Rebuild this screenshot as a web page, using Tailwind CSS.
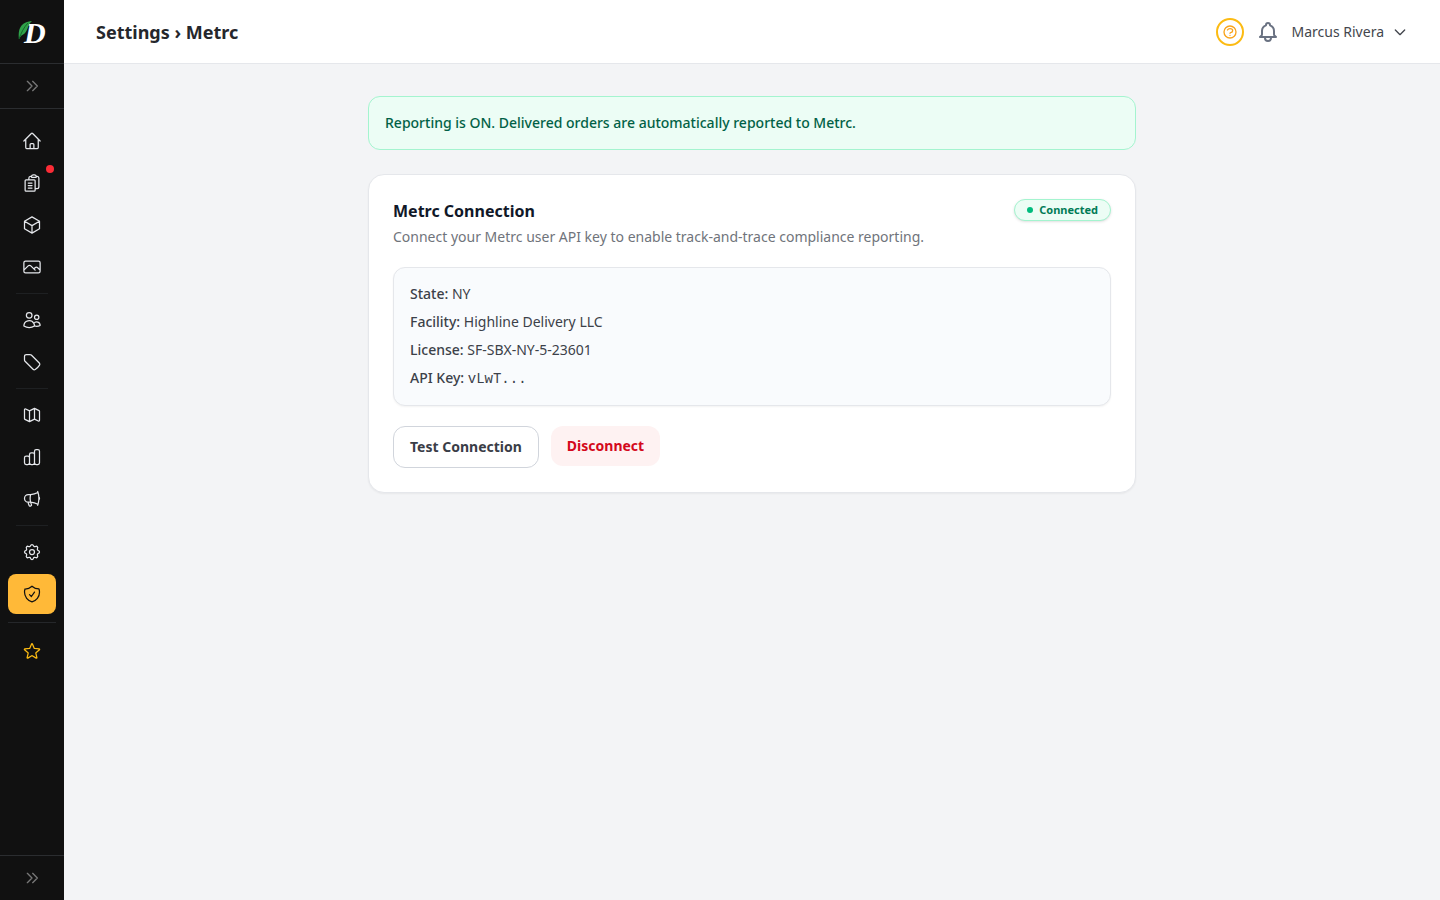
<!DOCTYPE html>
<html lang="en">
<head>
    <meta charset="UTF-8">
    <meta name="viewport" content="width=device-width, initial-scale=1">
    <title>Settings › Metrc</title>
    <script src="https://cdn.jsdelivr.net/npm/@tailwindcss/browser@4"></script>
</head>
<body class="flex min-h-screen bg-gray-100 font-['Noto_Sans',sans-serif] text-sm text-gray-700">

    <!-- Sidebar -->
    <aside class="flex min-h-screen w-16 shrink-0 flex-col bg-[#111111] text-gray-200">
        <a href="#" aria-label="Home page" class="flex h-16 items-center justify-center border-b border-[#2b2d30]">
            <svg class="size-12 overflow-visible" viewBox="0 0 48 48" aria-hidden="true">
                <text x="16" y="35" font-family="Liberation Sans Narrow, Liberation Serif, serif" font-size="30" font-weight="700" font-style="italic" fill="#ffffff">D</text>
                <path d="M11 31C10 22 12 14 24 13C20 16 20 22 17 25C15 27 13 27 11 31Z" fill="#2fa24a"/>
                <path d="M11 31C13 25 16 19 20 15" fill="none" stroke="#14662a" stroke-width="1"/>
            </svg>
        </a>
        <button type="button" aria-label="Expand sidebar" class="flex h-[45px] items-center justify-center border-b border-[#2b2d30] text-[#777777]">
            <svg class="size-4" fill="none" viewBox="0 0 24 24" stroke="currentColor" stroke-width="2" stroke-linecap="round" stroke-linejoin="round"><path d="M13 5l7 7-7 7M5 5l7 7-7 7"/></svg>
        </button>

        <nav class="flex flex-1 flex-col px-2 py-3">
            <div class="flex flex-col gap-0.5">
                <a href="#" aria-label="Home" class="flex h-10 items-center justify-center rounded-lg">
                    <svg class="size-5" fill="none" viewBox="0 0 24 24" stroke="currentColor" stroke-width="1.5" stroke-linecap="round" stroke-linejoin="round"><path d="m2.25 12 8.954-8.955c.44-.439 1.152-.439 1.591 0L21.75 12M4.5 9.75v10.125c0 .621.504 1.125 1.125 1.125H9.75v-4.875c0-.621.504-1.125 1.125-1.125h2.25c.621 0 1.125.504 1.125 1.125V21h4.125c.621 0 1.125-.504 1.125-1.125V9.75M8.25 21h8.25"/></svg>
                </a>
                <a href="#" aria-label="Orders" class="relative flex h-10 items-center justify-center rounded-lg">
                    <svg class="size-5" fill="none" viewBox="0 0 24 24" stroke="currentColor" stroke-width="1.5" stroke-linecap="round" stroke-linejoin="round"><path d="M7.5 12h4.5M7.5 15h4.5M7.5 18h4.5m3.75 .75H18a2.25 2.25 0 0 0 2.25-2.25V6.108c0-1.135-.845-2.098-1.976-2.192a48.424 48.424 0 0 0-1.123-.08m-5.801 0c-.065.21-.1.433-.1.664 0 .414.336.75.75.75h4.5a.75.75 0 0 0 .75-.75 2.25 2.25 0 0 0-.1-.664m-5.8 0A2.251 2.251 0 0 1 13.5 2.25H15c1.012 0 1.867.668 2.15 1.586m-5.8 0c-.376.023-.75.05-1.124.08C9.095 4.01 8.25 4.973 8.25 6.108V8.25m0 0H4.875c-.621 0-1.125.504-1.125 1.125v11.25c0 .621.504 1.125 1.125 1.125h9.75c.621 0 1.125-.504 1.125-1.125V9.375c0-.621-.504-1.125-1.125-1.125H8.25Z"/></svg>
                    <span class="absolute top-0.5 right-0.5 size-2 rounded-full bg-[#fb2c36]"></span>
                </a>
                <a href="#" aria-label="Products" class="flex h-10 items-center justify-center rounded-lg">
                    <svg class="size-5" fill="none" viewBox="0 0 24 24" stroke="currentColor" stroke-width="1.5" stroke-linecap="round" stroke-linejoin="round"><path d="m21 7.5-9-5.25L3 7.5m18 0-9 5.25m9-5.25v9l-9 5.25M3 7.5l9 5.25M3 7.5v9l9 5.25m0-9v9"/></svg>
                </a>
                <a href="#" aria-label="Media" class="flex h-10 items-center justify-center rounded-lg">
                    <svg class="size-5" fill="none" viewBox="0 0 24 24" stroke="currentColor" stroke-width="1.5" stroke-linecap="round" stroke-linejoin="round"><path d="m2.25 15.75 5.159-5.159a2.25 2.25 0 0 1 3.182 0l5.159 5.159m-1.5-1.5 1.409-1.409a2.25 2.25 0 0 1 3.182 0l2.909 2.909M4.25 19h15.5a2 2 0 0 0 2-2V7a2 2 0 0 0-2-2H4.25a2 2 0 0 0-2 2v10a2 2 0 0 0 2 2Z"/></svg>
                </a>
            </div>

            <div class="mx-2 my-1.5 border-t border-[#1e2022]"></div>

            <div class="flex flex-col gap-0.5">
                <a href="#" aria-label="Customers" class="flex h-10 items-center justify-center rounded-lg">
                    <svg class="size-5" fill="none" viewBox="0 0 24 24" stroke="currentColor" stroke-width="1.5" stroke-linecap="round" stroke-linejoin="round"><path d="M15 19.128a9.38 9.38 0 0 0 2.625.372 9.337 9.337 0 0 0 4.121-.952 4.125 4.125 0 0 0-7.533-2.493M15 19.128v-.003c0-1.113-.285-2.16-.786-3.07M15 19.128v.106A12.318 12.318 0 0 1 8.624 21c-2.331 0-4.512-.645-6.374-1.766l-.001-.109a6.375 6.375 0 0 1 11.964-3.07M12 6.375a3.375 3.375 0 1 1-6.75 0 3.375 3.375 0 0 1 6.75 0Zm8.25 2.25a2.625 2.625 0 1 1-5.25 0 2.625 2.625 0 0 1 5.25 0Z"/></svg>
                </a>
                <a href="#" aria-label="Promotions" class="flex h-10 items-center justify-center rounded-lg">
                    <svg class="size-5" fill="none" viewBox="0 0 24 24" stroke="currentColor" stroke-width="1.5" stroke-linecap="round" stroke-linejoin="round"><path d="M9.568 3H5.25A2.25 2.25 0 0 0 3 5.25v4.318c0 .597.237 1.17.659 1.591l9.581 9.581c.699.699 1.78.872 2.607.33a18.095 18.095 0 0 0 5.223-5.223c.542-.827.369-1.908-.33-2.607L11.16 3.66A2.25 2.25 0 0 0 9.568 3Z"/></svg>
                </a>
            </div>

            <div class="mx-2 my-1.5 border-t border-[#1e2022]"></div>

            <div class="flex flex-col gap-0.5">
                <a href="#" aria-label="Map" class="flex h-10 items-center justify-center rounded-lg">
                    <svg class="size-5" fill="none" viewBox="0 0 24 24" stroke="currentColor" stroke-width="1.5" stroke-linecap="round" stroke-linejoin="round"><path d="M9 20l-5.447-2.724A1 1 0 013 16.382V5.618a1 1 0 011.447-.894L9 7m0 13l6-3m-6 3V7m6 10l4.553 2.276A1 1 0 0021 18.382V7.618a1 1 0 00-.553-.894L15 4m0 13V4m0 0L9 7"/></svg>
                </a>
                <a href="#" aria-label="Reports" class="flex h-10 items-center justify-center rounded-lg">
                    <svg class="size-5" fill="none" viewBox="0 0 24 24" stroke="currentColor" stroke-width="1.5" stroke-linecap="round" stroke-linejoin="round"><path d="M9 19v-6a2 2 0 00-2-2H5a2 2 0 00-2 2v6a2 2 0 002 2h2a2 2 0 002-2zm0 0V9a2 2 0 012-2h2a2 2 0 012 2v10m-6 0a2 2 0 002 2h2a2 2 0 002-2m0 0V5a2 2 0 012-2h2a2 2 0 012 2v14a2 2 0 01-2 2h-2a2 2 0 01-2-2z"/></svg>
                </a>
                <a href="#" aria-label="Marketing" class="flex h-10 items-center justify-center rounded-lg">
                    <svg class="size-5" fill="none" viewBox="0 0 24 24" stroke="currentColor" stroke-width="1.5" stroke-linecap="round" stroke-linejoin="round"><path d="M10.34 15.84c-.688-.06-1.386-.09-2.09-.09H7.5a4.5 4.5 0 1 1 0-9h.75c.704 0 1.402-.03 2.09-.09m0 9.18c.253.962.584 1.892.985 2.783.247.55.06 1.21-.463 1.511l-.657.38c-.551.318-1.26.117-1.527-.461a20.845 20.845 0 0 1-1.44-4.282m3.102.069a18.03 18.03 0 0 1-.59-4.59c0-1.586.205-3.124.59-4.59m0 9.18a23.848 23.848 0 0 1 8.835 2.535M10.34 6.66a23.847 23.847 0 0 0 8.835-2.535m0 0A23.74 23.74 0 0 0 18.795 3m.38 1.125a23.91 23.91 0 0 1 1.014 5.395m-1.014 8.855c-.118.38-.245.754-.38 1.125m.38-1.125a23.91 23.91 0 0 0 1.014-5.395m0-3.46c.495.413.811 1.035.811 1.73 0 .695-.316 1.317-.811 1.73m0-3.46a24.347 24.347 0 0 1 0 3.46"/></svg>
                </a>
            </div>

            <div class="mx-2 my-1.5 border-t border-[#1e2022]"></div>

            <div class="flex flex-col gap-0.5">
                <a href="#" aria-label="Settings" class="flex h-10 items-center justify-center rounded-lg">
                    <svg class="size-5" fill="none" viewBox="0 0 24 24" stroke="currentColor" stroke-width="1.5" stroke-linecap="round" stroke-linejoin="round"><path d="M10.325 4.317c.426-1.756 2.924-1.756 3.35 0a1.724 1.724 0 002.573 1.066c1.543-.94 3.31.826 2.37 2.37a1.724 1.724 0 001.065 2.572c1.756.426 1.756 2.924 0 3.35a1.724 1.724 0 00-1.066 2.573c.94 1.543-.826 3.31-2.37 2.37a1.724 1.724 0 00-2.572 1.065c-.426 1.756-2.924 1.756-3.35 0a1.724 1.724 0 00-2.573-1.066c-1.543.94-3.31-.826-2.37-2.37a1.724 1.724 0 00-1.065-2.572c-1.756-.426-1.756-2.924 0-3.35a1.724 1.724 0 001.066-2.573c-.94-1.543.826-3.31 2.37-2.37.996.608 2.296.07 2.572-1.065z"/><path d="M15 12a3 3 0 11-6 0 3 3 0 016 0z"/></svg>
                </a>
                <a href="#" aria-label="Compliance" aria-current="page" class="flex h-10 items-center justify-center rounded-lg bg-[#ffb938] text-[#111111]">
                    <svg class="size-5" fill="none" viewBox="0 0 24 24" stroke="currentColor" stroke-width="1.5" stroke-linecap="round" stroke-linejoin="round"><path d="M9 12.75 11.25 15 15 9.75m-3-7.036A11.959 11.959 0 0 1 3.598 6 11.99 11.99 0 0 0 3 9.749c0 5.592 3.824 10.29 9 11.623 5.176-1.332 9-6.03 9-11.622 0-1.31-.21-2.571-.598-3.751h-.152c-3.196 0-6.1-1.248-8.25-3.285Z"/></svg>
                </a>
            </div>

            <div class="my-2 border-t border-[#25272a]"></div>

            <a href="#" aria-label="Upgrade" class="flex h-10 items-center justify-center rounded-lg text-[#fcbb12]">
                <svg class="size-5" fill="none" viewBox="0 0 24 24" stroke="currentColor" stroke-width="1.5" stroke-linecap="round" stroke-linejoin="round"><path d="M11.48 3.499a.562.562 0 0 1 1.04 0l2.125 5.111a.563.563 0 0 0 .475.345l5.518.442c.499.04.701.663.321.988l-4.204 3.602a.563.563 0 0 0-.182.557l1.285 5.385a.562.562 0 0 1-.84.61l-4.725-2.885a.562.562 0 0 0-.586 0L6.982 20.54a.562.562 0 0 1-.84-.61l1.285-5.386a.562.562 0 0 0-.182-.557l-4.204-3.602a.562.562 0 0 1 .321-.988l5.518-.442a.563.563 0 0 0 .475-.345L11.48 3.5Z"/></svg>
            </a>
        </nav>

        <button type="button" aria-label="Expand sidebar" class="flex h-[45px] items-center justify-center border-t border-[#2b2d30] text-[#777777]">
            <svg class="size-4" fill="none" viewBox="0 0 24 24" stroke="currentColor" stroke-width="2" stroke-linecap="round" stroke-linejoin="round"><path d="M13 5l7 7-7 7M5 5l7 7-7 7"/></svg>
        </button>
    </aside>

    <div class="flex min-w-0 flex-1 flex-col">
        <!-- Top bar -->
        <header class="flex h-16 items-center justify-between border-b border-gray-200 bg-white px-8">
            <h1 class="text-lg font-bold text-[#25272c]">Settings › Metrc</h1>
            <div class="flex items-center gap-3">
                <button type="button" aria-label="Help" class="flex size-7 items-center justify-center rounded-full border-2 border-[#fcbb12] text-[#f9a31a]">
                    <svg class="size-4" fill="none" viewBox="0 0 24 24" stroke="currentColor" stroke-width="2" stroke-linecap="round" stroke-linejoin="round"><path d="M8.228 9c.549-1.165 2.03-2 3.772-2 2.21 0 4 1.343 4 3 0 1.4-1.278 2.575-3.006 2.907-.542.104-.994.54-.994 1.093m0 3h.01M21 12a9 9 0 11-18 0 9 9 0 0118 0z"/></svg>
                </button>
                <button type="button" aria-label="Notifications" class="text-gray-500">
                    <svg class="size-6" fill="none" viewBox="0 0 24 24" stroke="currentColor" stroke-width="2" stroke-linecap="round" stroke-linejoin="round"><path d="M15 17h5l-1.405-1.405A2.032 2.032 0 0118 14.158V11a6.002 6.002 0 00-4-5.659V5a2 2 0 10-4 0v.341C7.67 6.165 6 8.388 6 11v3.159c0 .538-.214 1.055-.595 1.436L4 17h5m6 0v1a3 3 0 11-6 0v-1m6 0H9"/></svg>
                </button>
                <button type="button" class="flex items-center gap-2 text-[#43464d]">
                    <span>Marcus Rivera</span>
                    <svg class="size-4" fill="none" viewBox="0 0 24 24" stroke="currentColor" stroke-width="2" stroke-linecap="round" stroke-linejoin="round"><path d="M19 9l-7 7-7-7"/></svg>
                </button>
            </div>
        </header>

        <main class="p-8">
            <div class="mx-auto max-w-3xl space-y-6">
                <div role="status" class="rounded-xl border border-emerald-200 bg-emerald-50 p-4 font-medium text-emerald-800">
                    Reporting is ON. Delivered orders are automatically reported to Metrc.
                </div>

                <!-- Connection card -->
                <section class="rounded-2xl border border-gray-200 bg-white p-6 shadow-xs">
                    <div class="flex items-start justify-between">
                        <div>
                            <h2 class="text-base font-bold text-gray-900">Metrc Connection</h2>
                            <p class="mt-1 text-[#70747b]">Connect your Metrc user API key to enable track-and-trace compliance reporting.</p>
                        </div>
                        <span class="inline-flex items-center gap-1.5 rounded-full border border-emerald-200 bg-emerald-50 px-3 py-0.5 text-[11px] leading-4 font-bold text-emerald-700 shadow-sm">
                            <span class="size-1.5 rounded-full bg-emerald-500"></span>
                            Connected
                        </span>
                    </div>

                    <div class="mt-5 space-y-2 rounded-xl border border-gray-200 bg-[#f9fbfd] p-4 text-[#3c4149] shadow-xs">
                        <p><span class="font-medium">State:</span> NY</p>
                        <p><span class="font-medium">Facility:</span> Highline Delivery LLC</p>
                        <p><span class="font-medium">License:</span> SF-SBX-NY-5-23601</p>
                        <p><span class="font-medium">API Key:</span> <span class="font-['Liberation_Mono',monospace]">vLwT...</span></p>
                    </div>

                    <div class="mt-5 flex items-start gap-3">
                        <button type="button" class="rounded-xl border border-gray-300 bg-white px-4 py-2.5 font-bold text-[#3a3d47]">Test Connection</button>
                        <button type="button" class="rounded-xl bg-red-50 px-4 py-2.5 font-bold text-[#d4091c]">Disconnect</button>
                    </div>
                </section>
            </div>
        </main>
    </div>

</body>
</html>
